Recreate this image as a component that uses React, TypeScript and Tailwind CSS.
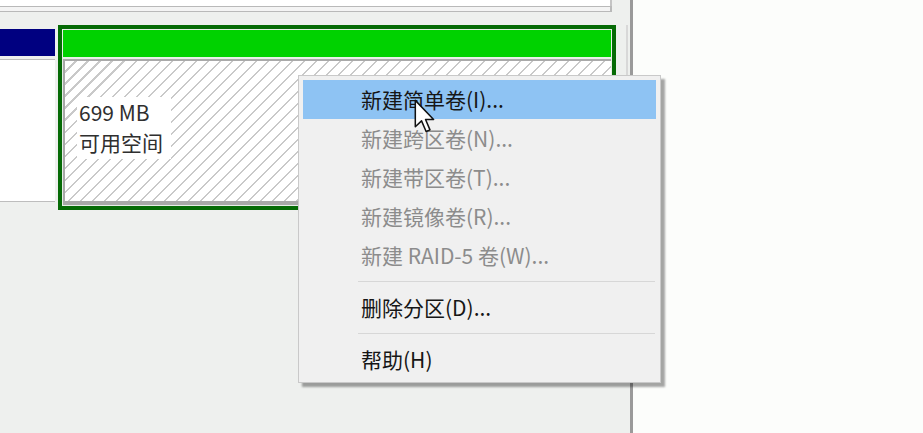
import React from "react";

const font = { fontFamily: '"Noto Sans CJK SC", "Noto Sans", sans-serif' };

type Item = { label: string; disabled?: boolean; active?: boolean } | "sep";

const items: Item[] = [
  { label: "新建简单卷(I)...", active: true },
  { label: "新建跨区卷(N)...", disabled: true },
  { label: "新建带区卷(T)...", disabled: true },
  { label: "新建镜像卷(R)...", disabled: true },
  { label: "新建 RAID-5 卷(W)...", disabled: true },
  "sep",
  { label: "删除分区(D)..." },
  "sep",
  { label: "帮助(H)" },
];

function ContextMenu() {
  return (
    <div
      className="absolute left-[298px] top-[75px] w-[363px] border border-[#c9c9c9] bg-[#f0f0f0] px-[4px] pt-[4px] pb-[3px] shadow-[4px_4px_2px_rgba(0,0,0,0.35)]"
      style={font}
    >
      {items.map((item, i) =>
        item === "sep" ? (
          <div key={i} className="flex h-[13px] items-center pl-[55px] pr-[1px]">
            <div className="h-px w-full bg-[#d7d7d7]" />
          </div>
        ) : (
          <div
            key={i}
            className={`flex h-[39px] items-center pl-[58px] text-[21px] leading-none ${
              item.active ? "bg-[#8ec3f3] text-[#161616]" : item.disabled ? "text-[#8c8c8c]" : "text-[#161616]"
            }`}
          >
            {item.label}
          </div>
        )
      )}
    </div>
  );
}

function Cursor() {
  return (
    <svg className="absolute left-[413px] top-[99px]" width="24" height="36" viewBox="0 0 16 26">
      <path
        d="M1 1 L1 20 L5.5 15.8 L8.8 23.5 L11.6 22.3 L8.4 14.8 L14.2 14.8 Z"
        fill="#fff"
        stroke="#111"
        strokeWidth="1.1"
        strokeLinejoin="round"
      />
    </svg>
  );
}

export default function App() {
  return (
    <div className="relative flex h-[433px] w-[923px] overflow-hidden bg-[#fcfdfb]" style={font}>
      {/* disk management pane */}
      <div className="flex w-[633px] flex-col border-r-[3px] border-[#9a9a9a] bg-[#eef0ee]">
        <div className="flex h-[25px] w-[612px] flex-col">
          <div className="h-[6px] border-r-2 border-[#c4c4c4] bg-white" />
          <div className="h-[6px] border-y border-r-2 border-[#b9b9b9] bg-[#f4f4f4]" />
        </div>
        <div className="flex h-[185px] w-[628px] border-r-2 border-[#d8d8d8]">
          <div className="mt-[4px] flex w-[55px] flex-col">
            <div className="h-[27px] bg-[#000080]" />
            <div className="mt-[3px] h-[143px] border-y border-[#bdbdbd] bg-white" />
          </div>
          <div className="ml-[3px] flex w-[558px] flex-col border-4 border-[#066b06] bg-[#e9efe9] p-px">
            <div className="h-[27px] w-[548px] bg-[#00d200]" />
            <div className="mt-[2px] flex w-[548px] flex-1 border-t-2 border-l-2 border-b-[4px] border-[#a9a9a9] bg-white bg-[repeating-linear-gradient(135deg,#ffffff_0px,#ffffff_7px,#c9c9c9_7px,#c9c9c9_8.5px)]">
              <div className="ml-[12px] mt-[36px] h-[62px] bg-white pr-[8px] pl-[2px] text-[21px] leading-[30px] text-[#2f2f2f]">
                <div>699 MB</div>
                <div>可用空间</div>
              </div>
            </div>
          </div>
        </div>
      </div>
      <div className="flex-1" />
      <ContextMenu />
      <Cursor />
    </div>
  );
}
